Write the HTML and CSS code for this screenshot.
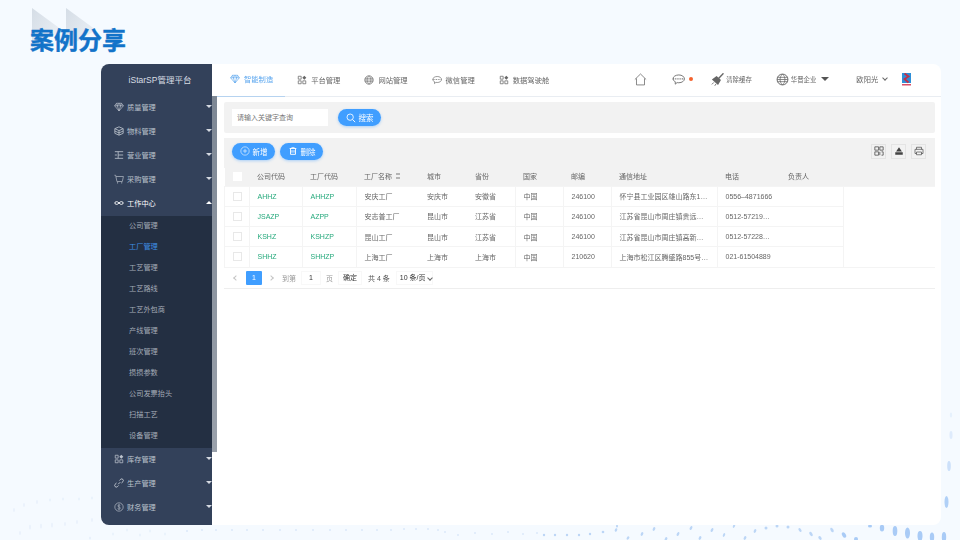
FILE: index.html
```html
<!DOCTYPE html>
<html lang="zh-CN">
    <head>
        <meta charset="UTF-8" />
        <meta name="viewport" content="width=device-width, initial-scale=1.0" />
        <title>案例分享</title>
        <link rel="stylesheet" href="styles.css">
    </head>
    <body>
        <svg class="icon-defs" width="0" height="0">
            <symbol id="i-diamond" viewBox="0 0 12 12"><path d="M3 1.500h6L11.300 4.500 6 10.800.7 4.500zM.7 4.500h10.600M4 4.500L6 10.800 8 4.500M3 1.500L4 4.500 6 1.500 8 4.500 9 1.500" fill="none" stroke="currentColor" stroke-width=".8"/></symbol>
            <symbol id="i-cube" viewBox="0 0 12 12"><path d="M6 1l5 2.200v5.600L6 11 1 8.800V3.200zM1 3.200L6 5.500 11 3.200M6 5.500V11M1 6l5 2.300L11 6" fill="none" stroke="currentColor" stroke-width="1"/></symbol>
            <symbol id="i-list" viewBox="0 0 12 12"><path d="M1 2h10M1 10h10M1 6h2.500M5 6h6M5 2v8" fill="none" stroke="currentColor" stroke-width="1"/></symbol>
            <symbol id="i-cart" viewBox="0 0 12 12"><path d="M.5 1.500H2L3.500 9H10L11.300 3H2.500" fill="none" stroke="currentColor" stroke-width=".8"/><circle cx="4.300" cy="10.600" r=".7" fill="currentColor"/><circle cx="9.300" cy="10.600" r=".7" fill="currentColor"/></symbol>
            <symbol id="i-loop" viewBox="0 0 12 12"><path d="M6 6C4.500 3.800 1 3.800 1 6s3.500 2.200 5 0 5-2.200 5 0-3.500 2.200-5 0z" fill="none" stroke="currentColor" stroke-width="1.100"/></symbol>
            <symbol id="i-grid" viewBox="0 0 12 12"><path d="M1.500 1.500h3.500v3.500H1.500zM1.500 7h3.500v3.500H1.500zM7 7h3.500v3.500H7z" fill="none" stroke="currentColor" stroke-width=".9"/><path d="M8.800.8l2.400 2.400-2.400 2.400-2.400-2.400z" fill="currentColor"/></symbol>
            <symbol id="i-link" viewBox="0 0 12 12"><path d="M5 7.500L7.500 5M6.500 3L8 1.500a2 2 0 0 1 2.800 2.800L9 6M5.500 9L4 10.500A2 2 0 0 1 1.200 7.700L3 6" fill="none" stroke="currentColor" stroke-width="1.200"/></symbol>
            <symbol id="i-money" viewBox="0 0 12 12"><circle cx="6" cy="6" r="5" fill="none" stroke="currentColor" stroke-width=".8"/><path d="M7.600 4.200C7 3.400 4.500 3.300 4.500 4.700S7.700 5.800 7.700 7.300 5 8.800 4.300 7.800M6 2.500v7" fill="none" stroke="currentColor" stroke-width=".7"/></symbol>
            <symbol id="i-globe" viewBox="0 0 12 12"><circle cx="6" cy="6" r="5" fill="none" stroke="currentColor" stroke-width=".9"/><path d="M1.200 4h9.600M1.200 8h9.600M1 6h10M6 1C3 3.500 3 8.500 6 11M6 1c3 2.500 3 7.500 0 10" fill="none" stroke="currentColor" stroke-width=".7"/></symbol>
            <symbol id="i-chat" viewBox="0 0 12 12"><path d="M6.300 1.800c2.900 0 5.100 1.500 5.100 3.600S9.200 9 6.300 9C5.700 9 5.200 9 4.700 8.800L3 10.300V8C1.700 7.400.9 6.500.9 5.400.9 3.300 3.400 1.800 6.300 1.800z" fill="none" stroke="currentColor" stroke-width=".8"/><path d="M1 5.400h10.400" stroke="currentColor" stroke-width="1" stroke-dasharray="1 1"/></symbol>
            <symbol id="i-home" viewBox="0 0 12 12"><path d="M.8 6L6 .9 11.200 6M2.300 5v6h7.400V5" fill="none" stroke="currentColor" stroke-width=".7"/></symbol>
            <symbol id="i-broom" viewBox="0 0 12 12"><path d="M7 5L11.500.3" stroke="currentColor" stroke-width="1.300"/><path d="M5.200 2.800L9.200 6.500 6.500 11 .8 6z" fill="currentColor"/><path d="M.8 10.500l1.800-1.800M3.500 11.800l1.200-1.800" stroke="currentColor" stroke-width=".8"/></symbol>
            <symbol id="i-search" viewBox="0 0 12 12"><circle cx="5" cy="5" r="3.800" fill="none" stroke="currentColor" stroke-width="1"/><path d="M8 8l3 3" stroke="currentColor" stroke-width="1.100"/></symbol>
            <symbol id="i-plus" viewBox="0 0 12 12"><circle cx="6" cy="6" r="5" fill="none" stroke="currentColor" stroke-width=".7"/><path d="M6 3.500v5M3.500 6h5" stroke="currentColor" stroke-width=".7"/></symbol>
            <symbol id="i-trash" viewBox="0 0 12 12"><path d="M2 3h8M3 3v7h6V3M4.800 5v3M7.200 5v3" fill="none" stroke="currentColor" stroke-width="1.100"/><path d="M4.500 3V1.800h3V3" fill="none" stroke="currentColor" stroke-width=".8"/></symbol>
            <symbol id="i-qr" viewBox="0 0 12 12"><path d="M1 1h4.500v4H1zM7 1h4v4H7zM1 7h4.500v4H1zM7 7v4M9 7h2v4H9" fill="none" stroke="currentColor" stroke-width=".9"/></symbol>
            <symbol id="i-export" viewBox="0 0 12 12"><path d="M6 1.500L9.500 6.500H2.500zM1.500 7.500h9v3h-9z" fill="currentColor"/></symbol>
            <symbol id="i-print" viewBox="0 0 12 12"><path d="M3 4V1.500h6V4M3 9H1.200V4h9.600v5H9M3 7.200h6v3.300H3z" fill="none" stroke="currentColor" stroke-width=".8"/></symbol>
        </svg>

        <div class="decor">
            <div class="tri tri-one"></div>
            <div class="tri tri-two"></div>
            <svg class="dots" viewBox="0 0 960 540" width="960" height="540">
                <g fill="#e7f0fb">
                    <ellipse cx="14" cy="510" rx=".8" ry="2"/><ellipse cx="24" cy="505" rx=".8" ry="2"/><ellipse cx="37" cy="502" rx=".8" ry="2"/><ellipse cx="50" cy="500" rx=".8" ry="1.500"/><ellipse cx="63" cy="499" rx=".8" ry="1.500"/><ellipse cx="79" cy="499" rx=".8" ry="1.500"/><ellipse cx="92" cy="498" rx=".8" ry="1.500"/>
                    <ellipse cx="20" cy="533" rx=".8" ry="2"/><ellipse cx="30" cy="527" rx=".8" ry="2.500"/><ellipse cx="41" cy="526" rx=".8" ry="2.500"/><ellipse cx="52" cy="525" rx=".8" ry="2.500"/><ellipse cx="65" cy="524" rx=".8" ry="2"/><ellipse cx="77" cy="522" rx=".8" ry="2"/><ellipse cx="92" cy="520" rx=".8" ry="2"/>
                    <ellipse cx="90" cy="538" rx="1" ry="1.500"/><ellipse cx="113" cy="534" rx=".8" ry="1.500"/><ellipse cx="127" cy="530" rx=".8" ry="1.500"/><ellipse cx="140" cy="535" rx=".8" ry="1.500"/><ellipse cx="150" cy="531" rx=".8" ry="1.500"/><ellipse cx="165" cy="534" rx=".8" ry="1.500"/>
                </g>
                <g fill="#dbe8fa">
                    <circle cx="187" cy="531" r="1"/><circle cx="202" cy="530" r="1"/><circle cx="216" cy="530" r="1"/><circle cx="232" cy="530" r="1"/><circle cx="247" cy="530" r="1"/><circle cx="263" cy="530" r="1"/><circle cx="280" cy="530" r="1"/><circle cx="296" cy="530" r="1"/><circle cx="313" cy="530" r="1"/><circle cx="330" cy="530" r="1"/><circle cx="346" cy="530" r="1"/><circle cx="362" cy="530" r="1"/><circle cx="377" cy="530" r="1"/><circle cx="391" cy="530" r="1"/><circle cx="404" cy="529" r="1"/><circle cx="416" cy="529" r="1"/><circle cx="428" cy="529" r="1"/><circle cx="438" cy="530" r="1"/>
                    <circle cx="445" cy="532" r="1"/><circle cx="458" cy="535" r="1"/><circle cx="475" cy="533" r="1"/><circle cx="492" cy="534" r="1"/><circle cx="508" cy="532" r="1"/><circle cx="523" cy="534" r="1"/><circle cx="537" cy="533" r="1"/><circle cx="555" cy="535" r="1"/>
                </g>
                <g fill="#bcd6f6">
                    <circle cx="544" cy="535" r="1.200"/><circle cx="555" cy="535" r="1.200"/><circle cx="567" cy="535" r="1.200"/><circle cx="579" cy="535" r="1.200"/><circle cx="590" cy="534" r="1.200"/><circle cx="603" cy="532" r="1.300"/>
                    <ellipse cx="616" cy="530" rx="1.200" ry="1.800" transform="rotate(25 616 530)"/><ellipse cx="617" cy="526" rx="1" ry="1.500"/>
                    <ellipse cx="628" cy="538" rx="1.200" ry="1.800" transform="rotate(30 628 538)"/><ellipse cx="642" cy="534" rx="1.200" ry="2" transform="rotate(25 642 534)"/><ellipse cx="654" cy="529" rx="1.200" ry="2" transform="rotate(25 654 529)"/>
                    <ellipse cx="666" cy="539" rx="1.200" ry="2" transform="rotate(25 666 539)"/><ellipse cx="678" cy="534" rx="1.200" ry="2.200" transform="rotate(25 678 534)"/><ellipse cx="691" cy="528" rx="1.200" ry="2.200" transform="rotate(25 691 528)"/>
                    <ellipse cx="700" cy="538" rx="1.200" ry="2" transform="rotate(25 700 538)"/><ellipse cx="712" cy="530" rx="1.200" ry="2.200" transform="rotate(25 712 530)"/><ellipse cx="724" cy="535" rx="1" ry="2" transform="rotate(25 724 535)"/>
                    <ellipse cx="734" cy="526" rx="1" ry="2" transform="rotate(25 734 526)"/><ellipse cx="745" cy="538" rx="1.200" ry="2" transform="rotate(25 745 538)"/><ellipse cx="755" cy="531" rx="1.200" ry="2" transform="rotate(25 755 531)"/>
                    <circle cx="766" cy="528" r="1.500"/><circle cx="777" cy="526" r="1.500"/><circle cx="788" cy="527" r="1.500"/>
                    <ellipse cx="800" cy="530" rx="1.200" ry="2.200" transform="rotate(-35 800 530)"/><ellipse cx="811" cy="534" rx="1.400" ry="2.400" transform="rotate(-35 811 534)"/>
                    <ellipse cx="820" cy="538" rx="1.400" ry="2" transform="rotate(-35 820 538)"/><ellipse cx="832" cy="530" rx="1.400" ry="2.500" transform="rotate(-30 832 530)"/>
                </g>
                <g fill="#a9cbf6">
                    <ellipse cx="844" cy="535" rx="1.800" ry="3" transform="rotate(-30 844 535)"/><circle cx="856" cy="539" r="2"/>
                    <ellipse cx="870" cy="526" rx="2" ry="1.500"/><ellipse cx="882" cy="528" rx="2.200" ry="3.500"/><ellipse cx="895" cy="531" rx="2.300" ry="5"/><ellipse cx="907.500" cy="533" rx="2.500" ry="5.500"/>
                    <ellipse cx="920" cy="536" rx="2.500" ry="5"/><ellipse cx="932" cy="537" rx="2.200" ry="4.500"/><ellipse cx="944" cy="537" rx="2.200" ry="5"/>
                    <ellipse cx="946.500" cy="502" rx="2" ry="6" opacity=".9"/>
                    <ellipse cx="949" cy="466" rx="1.800" ry="5" opacity=".55"/>
                    <ellipse cx="951" cy="435" rx="1.500" ry="4" opacity=".3"/>
                    <ellipse cx="951" cy="415" rx="1.200" ry="2.500" opacity=".2"/>
                </g>
            </svg>
        </div>

        <h1 class="page-title">案例分享</h1>

        <div class="window">
            <aside class="sidebar">
                <div class="side-head">iStarSP管理平台</div>
                <div class="side-item"><svg class="ico"><use href="#i-diamond"/></svg>质量管理<span class="caret"></span></div>
                <div class="side-item"><svg class="ico"><use href="#i-cube"/></svg>物料管理<span class="caret"></span></div>
                <div class="side-item"><svg class="ico"><use href="#i-list"/></svg>营业管理<span class="caret"></span></div>
                <div class="side-item"><svg class="ico"><use href="#i-cart"/></svg>采购管理<span class="caret"></span></div>
                <div class="side-item side-open"><svg class="ico"><use href="#i-loop"/></svg>工作中心<span class="caret caret-up"></span></div>
                <div class="side-sub">
                    <div class="sub-item">公司管理</div>
                    <div class="sub-item sub-active">工厂管理</div>
                    <div class="sub-item">工艺管理</div>
                    <div class="sub-item">工艺路线</div>
                    <div class="sub-item">工艺外包商</div>
                    <div class="sub-item">产线管理</div>
                    <div class="sub-item">班次管理</div>
                    <div class="sub-item">损损参数</div>
                    <div class="sub-item">公司发票抬头</div>
                    <div class="sub-item">扫描工艺</div>
                    <div class="sub-item">设备管理</div>
                </div>
                <div class="side-item"><svg class="ico"><use href="#i-grid"/></svg>库存管理<span class="caret"></span></div>
                <div class="side-item"><svg class="ico"><use href="#i-link"/></svg>生产管理<span class="caret"></span></div>
                <div class="side-item"><svg class="ico"><use href="#i-money"/></svg>财务管理<span class="caret"></span></div>
                <div class="side-scroll"></div>
            </aside>

            <main class="main">
                <header class="topbar">
                    <nav class="tabs">
                        <div class="tab tab-active"><svg class="ico"><use href="#i-diamond"/></svg>智能制造</div>
                        <div class="tab"><svg class="ico"><use href="#i-grid"/></svg>平台管理</div>
                        <div class="tab"><svg class="ico"><use href="#i-globe"/></svg>网站管理</div>
                        <div class="tab"><svg class="ico"><use href="#i-chat"/></svg>微信管理</div>
                        <div class="tab"><svg class="ico"><use href="#i-grid"/></svg>数据驾驶舱</div>
                    </nav>
                    <div class="top-tools">
                        <svg class="ico ico-big home"><use href="#i-home"/></svg>
                        <div class="chat"><svg class="ico ico-big"><use href="#i-chat"/></svg><span class="red-dot"></span></div>
                        <div class="tool clear"><svg class="ico ico-big"><use href="#i-broom"/></svg>清除缓存</div>
                        <div class="tool company"><svg class="ico ico-big"><use href="#i-globe"/></svg>华晋企业<span class="caret-dark"></span></div>
                        <div class="tool user">欧阳光<span class="chev"></span></div>
                        <svg class="logo" viewBox="0 0 9 13" width="9" height="13">
                            <rect width="9" height="10" fill="#2e8fd8"/>
                            <path d="M2.500 .5l4 3-4 2.500 4 3.500" fill="none" stroke="#c0304a" stroke-width="1.800"/>
                            <rect y="11" width="9" height="1.500" fill="#d8506a"/>
                        </svg>
                    </div>
                </header>

                <section class="search-panel">
                    <div class="search-input">请输入关键字查询</div>
                    <button class="pill"><svg class="ico"><use href="#i-search"/></svg>搜索</button>
                </section>

                <section class="table-panel">
                    <div class="actions">
                        <button class="pill"><svg class="ico"><use href="#i-plus"/></svg>新增</button>
                        <button class="pill"><svg class="ico"><use href="#i-trash"/></svg>删除</button>
                        <div class="table-tools">
                            <span class="tool-btn"><svg class="ico"><use href="#i-qr"/></svg></span>
                            <span class="tool-btn"><svg class="ico"><use href="#i-export"/></svg></span>
                            <span class="tool-btn"><svg class="ico"><use href="#i-print"/></svg></span>
                        </div>
                    </div>
                    <table class="data">
                        <colgroup>
                            <col class="c-check"><col class="c-code"><col class="c-code2"><col class="c-name"><col class="c-mid"><col class="c-mid"><col class="c-mid"><col class="c-mid"><col class="c-addr"><col class="c-tel"><col class="c-owner"><col>
                        </colgroup>
                        <thead>
                            <tr>
                                <th class="cell-check"><span class="check check-head"></span></th>
                                <th>公司代码</th>
                                <th>工厂代码</th>
                                <th>工厂名称<span class="sort"></span></th>
                                <th>城市</th>
                                <th>省份</th>
                                <th>国家</th>
                                <th>邮编</th>
                                <th>通信地址</th>
                                <th>电话</th>
                                <th>负责人</th>
                                <th></th>
                            </tr>
                        </thead>
                        <tbody>
                            <tr>
                                <td class="cell-check"><span class="check"></span></td>
                                <td class="green">AHHZ</td><td class="green">AHHZP</td>
                                <td>安庆工厂</td><td>安庆市</td><td>安徽省</td><td>中国</td><td>246100</td>
                                <td>怀宁县工业园区雄山路东1…</td><td>0556–4871666</td><td></td>
                                <td class="blank" rowspan="4"></td>
                            </tr>
                            <tr>
                                <td class="cell-check"><span class="check"></span></td>
                                <td class="green">JSAZP</td><td class="green">AZPP</td>
                                <td>安志普工厂</td><td>昆山市</td><td>江苏省</td><td>中国</td><td>246100</td>
                                <td>江苏省昆山市周庄镇贵远…</td><td>0512-57219…</td><td></td>
                            </tr>
                            <tr>
                                <td class="cell-check"><span class="check"></span></td>
                                <td class="green">KSHZ</td><td class="green">KSHZP</td>
                                <td>昆山工厂</td><td>昆山市</td><td>江苏省</td><td>中国</td><td>246100</td>
                                <td>江苏省昆山市周庄镇高新…</td><td>0512-57228…</td><td></td>
                            </tr>
                            <tr>
                                <td class="cell-check"><span class="check"></span></td>
                                <td class="green">SHHZ</td><td class="green">SHHZP</td>
                                <td>上海工厂</td><td>上海市</td><td>上海市</td><td>中国</td><td>210620</td>
                                <td>上海市松江区腾盛路855号…</td><td>021-61504889</td><td></td>
                            </tr>
                        </tbody>
                    </table>
                    <div class="pager">
                        <span class="pg-arrow pg-prev"></span>
                        <span class="pg-num">1</span>
                        <span class="pg-arrow pg-next"></span>
                        <span class="pg-muted">到第</span>
                        <span class="pg-box pg-input">1</span>
                        <span class="pg-muted">页</span>
                        <span class="pg-box pg-ok">确定</span>
                        <span>共 4 条</span>
                        <span class="pg-box pg-size">10 条/页<span class="chev"></span></span>
                    </div>
                </section>
            </main>
        </div>
    </body>
</html>
```

FILE: styles.css
```css
* {
    box-sizing: border-box;
}

body {
    margin: 0;
    width: 960px;
    height: 540px;
    overflow: hidden;
    position: relative;
    background: #f5faff;
    font-family: "Liberation Sans", "Noto Sans CJK SC", sans-serif;
    font-size: 7px;
    color: #666;
}

.icon-defs {
    position: absolute;
}

.decor {
    position: absolute;
    inset: 0;
}

.dots {
    position: absolute;
    left: 0;
    top: 0;
}

.tri {
    position: absolute;
    top: 8px;
    width: 30px;
    height: 40px;
    clip-path: polygon(0 0, 100% 55%, 0 100%);
    background: linear-gradient(120deg, #d5dde6, #eef3f8);
}

.tri-one {
    left: 32px;
}

.tri-two {
    left: 66px;
}

.page-title {
    position: relative;
    margin: 0;
    height: 64px;
    padding: 25px 0 0 30px;
    font-size: 24px;
    line-height: 28px;
    font-weight: 700;
    color: #1273c9;
    font-family: "Noto Sans CJK SC", sans-serif;
    -webkit-text-stroke: .4px #1273c9;
}

/* the reference is a scaled down capture, text is soft */
.window {
    position: relative;
    display: flex;
    width: 840px;
    height: 461px;
    margin-left: 101px;
    background: #fff;
    border-radius: 8px;
    filter: blur(.3px);
}

.ico {
    width: 10px;
    height: 10px;
    flex: none;
}

.ico-big {
    width: 13px;
    height: 13px;
}

/* sidebar */
.sidebar {
    position: relative;
    width: 111px;
    flex: none;
    background: #33415a;
    border-radius: 8px 0 0 8px;
    color: #bcc3cd;
}

.side-head {
    height: 32px;
    line-height: 32px;
    text-align: center;
    font-size: 8.500px;
    color: #d8dde4;
    padding-left: 7px;
}

.side-item {
    position: relative;
    display: flex;
    align-items: center;
    gap: 3px;
    height: 24px;
    padding: 0 0 2px 13px;
    font-size: 7.200px;
}

.side-open {
    color: #fff;
}

.caret {
    position: absolute;
    right: 0;
    top: 9px;
    border-left: 3.500px solid transparent;
    border-right: 3.500px solid transparent;
    border-top: 3.500px solid #d5dae2;
}

.caret-up {
    border-top: 0;
    border-bottom: 3.500px solid #fff;
}

.side-sub {
    background: #232f42;
    padding-bottom: 1px;
}

.sub-item {
    height: 21px;
    line-height: 19px;
    padding-left: 28px;
    font-size: 7.200px;
    color: #a3abb7;
}

.sub-active {
    color: #3f8fe6;
}

.side-scroll {
    position: absolute;
    left: 111px;
    top: 32px;
    width: 5px;
    height: 356px;
    background: linear-gradient(#7d8794, #9aa1ab);
}

/* main column */
.main {
    flex: 1;
    min-width: 0;
    padding-left: 5px;
}

.topbar {
    display: flex;
    align-items: stretch;
    height: 33px;
    border-bottom: 1px solid #e9edf2;
}

.tabs {
    display: flex;
}

.tab {
    display: flex;
    align-items: center;
    gap: 4px;
    padding: 0 12px 2px;
    height: 33px;
    font-size: 7.300px;
    color: #666;
}

.tab-active {
    padding-left: 13px;
    color: #5aa6ef;
    border-bottom: 1px solid #b6d3f0;
}

.top-tools {
    display: flex;
    align-items: center;
    flex: 1;
    padding: 0 0 2px 73px;
    font-size: 6.400px;
}

.home {
    margin-right: 25px;
}

.chat {
    display: flex;
    align-items: center;
    gap: 4px;
    margin-right: 18px;
}

.red-dot {
    width: 4px;
    height: 4px;
    border-radius: 50%;
    background: #f4622e;
}

.tool {
    display: flex;
    align-items: center;
    gap: 2px;
}

.clear {
    margin-right: 24px;
}

.company {
    margin-right: 27px;
}

.caret-dark {
    margin-left: 3px;
    border-left: 4px solid transparent;
    border-right: 4px solid transparent;
    border-top: 4px solid #555;
}

.user {
    font-size: 7.300px;
    margin-right: 15px;
}

.chev {
    display: inline-block;
    width: 4px;
    height: 4px;
    margin: -2px 0 0 3px;
    border-right: .7px solid #666;
    border-bottom: .7px solid #666;
    transform: rotate(45deg);
}

/* search + table panels */
.search-panel {
    display: flex;
    align-items: center;
    gap: 10px;
    height: 31px;
    width: 711px;
    margin: 5px 0 5px 7px;
    padding-left: 8px;
    background: #f2f2f2;
    border-radius: 2px;
}

.search-input {
    width: 96px;
    height: 17px;
    line-height: 17px;
    padding-left: 5px;
    background: #fff;
    color: #777;
}

.pill {
    display: flex;
    align-items: center;
    justify-content: center;
    gap: 3px;
    width: 43px;
    height: 17px;
    padding: 0;
    border: 0;
    border-radius: 9px;
    background: #409eff;
    box-shadow: 0 1px 3px rgba(64, 158, 255, .4);
    color: #fff;
    font-family: inherit;
    font-size: 7.500px;
}

.table-panel {
    width: 711px;
    margin-left: 7px;
    border-bottom: 1px solid #eee;
}

.actions {
    display: flex;
    align-items: center;
    gap: 5px;
    height: 30px;
    padding: 0 9px 4px 8px;
    background: #f2f2f2;
}

.table-tools {
    display: flex;
    gap: 5px;
    margin-left: auto;
}

.tool-btn {
    display: flex;
    align-items: center;
    justify-content: center;
    width: 15px;
    height: 15px;
    border: 1px solid #e4e4e4;
    color: #444;
}

.data {
    width: 711px;
    table-layout: fixed;
    border-collapse: collapse;
}

.c-check { width: 25px; }
.c-code { width: 53px; }
.c-code2 { width: 54px; }
.c-name { width: 63px; }
.c-mid { width: 48px; }
.c-addr { width: 106px; }
.c-tel { width: 63px; }
.c-owner { width: 63px; }

.data th {
    height: 18px;
    padding: 0 0 2px 7.500px;
    background: #f2f2f2;
    font-weight: 400;
    text-align: left;
    color: #666;
    white-space: nowrap;
}

.data td {
    height: 20.250px;
    padding: 0 0 0 7.500px;
    border: 1px solid #f4f4f4;
    white-space: nowrap;
    overflow: hidden;
}

/* no dividers between the short columns */
.data td:nth-child(4),
.data td:nth-child(7),
.data td:nth-child(10) {
    border-right: 0;
}

.data td:nth-child(5),
.data td:nth-child(6) {
    border-left: 0;
    border-right: 0;
}

.data td:nth-child(11) {
    border-left: 0;
}

.data td:nth-child(8) {
    border-left: 1px solid #f4f4f4;
}

.data .blank {
    border-right: 0;
    border-left: 1px solid #f4f4f4;
}

.data .cell-check {
    padding: 0;
    text-align: center;
}

.green {
    color: #25a97c;
}

.check {
    display: inline-block;
    width: 9px;
    height: 9px;
    vertical-align: middle;
    background: #fff;
    border: 1px solid #e8e8e8;
}

.check-head {
    border-color: #fff;
}

.sort {
    display: inline-block;
    width: 4px;
    height: 6px;
    margin-left: 4px;
    vertical-align: -0.500px;
    background: linear-gradient(#b5b5b5 0 2px, transparent 2px 4px, #b5b5b5 4px);
}

.pager {
    display: flex;
    align-items: center;
    height: 20px;
    color: #555;
}

.pg-arrow {
    width: 4px;
    height: 4px;
    border-left: 1px solid #c4c4c4;
    border-bottom: 1px solid #c4c4c4;
    transform: rotate(45deg);
}

.pg-prev {
    margin: 0 8px 0 10px;
}

.pg-next {
    margin: 0 9px 0 7px;
    transform: rotate(225deg);
}

.pg-num {
    width: 16px;
    height: 14px;
    line-height: 14px;
    text-align: center;
    color: #fff;
    background: #409eff;
    border-radius: 1px;
}

.pg-muted {
    color: #999;
}

.pg-box {
    height: 14px;
    line-height: 12px;
    border: 1px solid #f8f8f8;
    color: #333;
}

.pg-input {
    width: 20px;
    margin: 0 5px;
    text-align: center;
}

.pg-ok {
    width: 24px;
    margin: 0 6px 0 5px;
    text-align: center;
}

.pg-size {
    width: 37px;
    margin-left: 6px;
    padding-left: 3px;
    white-space: nowrap;
}
```
